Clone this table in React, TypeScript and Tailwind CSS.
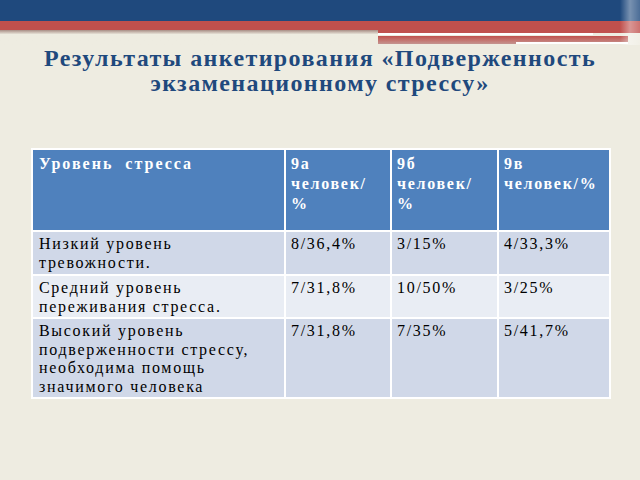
const rows = [
  {
    level: ['Низкий уровень', 'тревожности.'],
    a: '8/36,4%',
    b: '3/15%',
    c: '4/33,3%',
    bg: 'bg-[#d0d8e8]',
    h: 'h-[44px]',
  },
  {
    level: ['Средний уровень', 'переживания стресса.'],
    a: '7/31,8%',
    b: '10/50%',
    c: '3/25%',
    bg: 'bg-[#e9edf4]',
    h: 'h-[43px]',
  },
  {
    level: ['Высокий уровень', 'подверженности стрессу,', 'необходима помощь', 'значимого человека'],
    a: '7/31,8%',
    b: '7/35%',
    c: '5/41,7%',
    bg: 'bg-[#d0d8e8]',
    h: 'h-[80px]',
  },
];

function SlideHeader() {
  return (
    <div className="relative h-[45px]">
      <div className="h-[21px] bg-[#1f497d]" />
      <div className="h-[9px] bg-[#c0504d]" />
      <div className="flex h-[15px]">
        <div className="w-[378px] bg-gradient-to-b from-[#a88e86] to-[#eeece1] to-[30%]" />
        <div className="relative flex-1">
          <div className="h-[3px] bg-[#c0504d]" />
          <div className="mr-[47px] h-[2px] bg-white" />
          <div className="mt-[1px] mr-[12px] h-[8px] bg-gradient-to-b from-[#c0504d] to-[#c49490]" />
          <div className="absolute left-[138px] right-[12px] top-[12px] h-[2px] bg-white" />
        </div>
      </div>
      <div className="absolute right-0 top-0 h-[45px] w-[20px] bg-gradient-to-r from-white/0 via-white/40 to-white/20" />
    </div>
  );
}

export default function App() {
  return (
    <div className="h-[480px] w-[640px] overflow-hidden bg-[#eeece1]">
      <SlideHeader />
      <h1 className="mt-[1px] text-center font-['Liberation_Serif',serif] text-[24px] font-bold leading-[25px] tracking-[1.4px] text-[#1f497d]">
        Результаты анкетирования «Подверженность
        <br />
        экзаменационному стрессу»
      </h1>
      <table className="ml-[31px] mt-[52px] w-[578px] table-fixed border-collapse font-['Liberation_Serif',serif] text-[16px] leading-[18.5px] tracking-[1.7px] text-black">
        <colgroup>
          <col className="w-[253px]" />
          <col className="w-[106px]" />
          <col className="w-[107px]" />
          <col className="w-[112px]" />
        </colgroup>
        <thead>
          <tr className="h-[82px] bg-[#4f81bd] text-white">
            <th className="border-2 border-white px-[6px] pt-[4px] text-left align-top font-bold leading-[20px] tracking-[2px]">Уровень&nbsp; стресса</th>
            <th className="border-2 border-white px-[5px] pt-[4px] text-left align-top font-bold leading-[20px]">
              9а
              <br />
              человек/
              <br />%
            </th>
            <th className="border-2 border-white px-[5px] pt-[4px] text-left align-top font-bold leading-[20px]">
              9б
              <br />
              человек/
              <br />%
            </th>
            <th className="border-2 border-white px-[5px] pt-[4px] text-left align-top font-bold leading-[20px]">
              9в
              <br />
              человек/%
            </th>
          </tr>
        </thead>
        <tbody>
          {rows.map((r) => (
            <tr key={r.a + r.b} className={`${r.bg} ${r.h}`}>
              <td className="border-2 border-white px-[6px] pt-[3px] align-top">
                {r.level.map((line) => (
                  <div key={line}>{line}</div>
                ))}
              </td>
              <td className="border-2 border-white px-[5px] pt-[3px] align-top">{r.a}</td>
              <td className="border-2 border-white px-[5px] pt-[3px] align-top">{r.b}</td>
              <td className="border-2 border-white px-[5px] pt-[3px] align-top">{r.c}</td>
            </tr>
          ))}
        </tbody>
      </table>
    </div>
  );
}
